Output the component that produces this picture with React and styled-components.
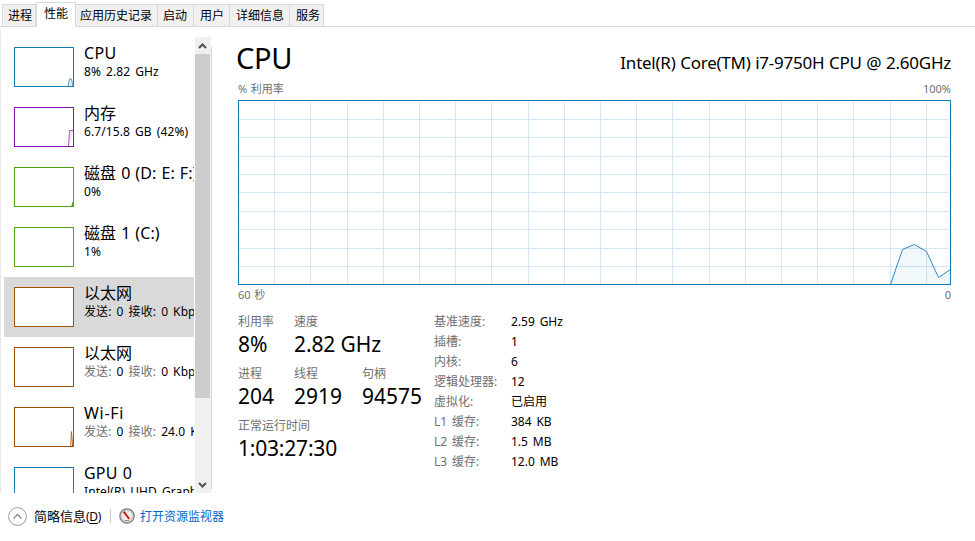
import React from 'react';
import styled, { createGlobalStyle } from 'styled-components';

const GlobalStyle = createGlobalStyle`
  * {
    box-sizing: border-box;
  }
  body {
    margin: 0;
    background-color: #fff;
    color: #000;
    font-family: 'Noto Sans', 'Noto Sans CJK SC', sans-serif;
    font-size: 12px;
    line-height: 20px;
    overflow: hidden;
  }
`;

const Window = styled.div`
  display: flex;
  flex-direction: column;
  width: 975px;
  height: 541px;
`;

const TabBar = styled.div`
  display: flex;
  align-items: flex-end;
  height: 27px;
  padding-left: 2px;
  border-bottom: 1px solid #d9d9d9;
`;

const Tab = styled.div`
  width: ${props => props.$width}px;
  height: ${props => (props.$active ? 25 : 22)}px;
  margin-bottom: ${props => (props.$active ? -1 : 0)}px;
  padding-left: ${props => props.$pad}px;
  border: 1px solid #d9d9d9;
  border-left-width: ${props => (props.$first || props.$active ? 1 : 0)}px;
  border-bottom: 0;
  background-color: ${props => (props.$active ? '#fff' : '#f0f0f0')};
  line-height: ${props => (props.$active ? 22 : 21)}px;
  white-space: nowrap;
`;

const Content = styled.div`
  display: flex;
  height: 463px;
  margin-top: 3px;
  border-left: 1px solid #e8e8e8;
`;

const Sidebar = styled.div`
  width: 191px;
  height: 456px;
  margin: 7px 0 0 3px;
  padding-right: 1px;
  overflow: hidden;
`;

const Item = styled.div`
  display: flex;
  height: 60px;
  padding: 10px 0 0 10px;
  background-color: ${props => (props.$selected ? '#d9d9d9' : '#fff')};
  overflow: hidden;
  white-space: nowrap;
`;

const Thumb = styled.svg`
  flex: none;
  width: 60px;
  height: 40px;
  margin-right: 10px;
  background-color: #fff;
`;

const ItemText = styled.div`
  margin-top: -5px;
`;

const ItemTitle = styled.div`
  font-size: 16px;
  line-height: 22px;
  letter-spacing: ${props => props.$spacing || 0}px;
  word-spacing: 0.7px;
`;

const ItemInfo = styled.div`
  font-size: 12px;
  line-height: 16px;
  letter-spacing: 0.1px;
  word-spacing: 1.8px;
`;

const Muted = styled.span`
  color: ${props => (props.$dark ? '#000' : '#707070')};
`;

const ScrollBar = styled.div`
  display: flex;
  flex-direction: column;
  width: 16px;
  height: 456px;
  margin-top: 7px;
  background-color: #f0f0f0;
`;

const Arrow = styled.svg`
  width: 15px;
  height: 17px;
`;

const ScrollThumb = styled.div`
  flex: none;
  width: 15px;
  height: 344px;
  margin-bottom: auto;
  background-color: #cdcdcd;
`;

const Divider = styled.div`
  width: 1px;
  height: 442px;
  margin-top: 17px;
  background-color: #d9d9d9;
`;

const Main = styled.div`
  width: 713px;
  margin-left: 26px;
`;

const Header = styled.div`
  display: flex;
  justify-content: space-between;
  height: 49px;
`;

const Heading = styled.div`
  margin-left: -2px;
  padding-top: 8px;
  font-size: 29px;
  line-height: 40px;
  letter-spacing: -0.3px;
`;

const Model = styled.div`
  padding-top: 21px;
  font-size: 17px;
  line-height: 24px;
  letter-spacing: -0.25px;
  word-spacing: 0.5px;
`;

const ChartCaption = styled.div`
  display: flex;
  justify-content: space-between;
  height: 21px;
  color: #707070;
  font-size: 11px;
  line-height: 20px;
  word-spacing: 0.8px;
`;

const Graph = styled.svg`
  display: block;
  width: 713px;
  height: 185px;
`;

const Stats = styled.div`
  display: flex;
  margin-top: 6px;
`;

const Counters = styled.div`
  width: 196px;
`;

const CounterRow = styled.div`
  display: grid;
  grid-template-columns: 56px 68px 72px;
  height: 52px;
  white-space: nowrap;
`;

const Label = styled.div`
  color: #707070;
  line-height: 20px;
`;

const Value = styled.div`
  font-size: 21px;
  line-height: 24px;
  letter-spacing: ${props => props.$spacing || 0}px;
`;

const Specs = styled.div`
  display: grid;
  grid-template-columns: 77px auto;
  grid-auto-rows: 20px;
  align-content: start;
  white-space: nowrap;
  word-spacing: 1.7px;
`;

const Footer = styled.div`
  display: flex;
  align-items: center;
  height: 46px;
  padding-left: 8px;
`;

const FooterIcon = styled.svg`
  width: ${props => props.$size}px;
  height: ${props => props.$size}px;
`;

const FooterText = styled.span`
  margin-left: 7px;
  font-size: 13px;
  u {
    text-underline-offset: 2px;
  }
`;

const Hotkey = styled.span`
  font-size: 12px;
  letter-spacing: -0.3px;
`;

const Separator = styled.div`
  width: 1px;
  height: 14px;
  margin: 0 8px 0 9px;
  background-color: #d0d0d0;
`;

const Link = styled.span`
  margin-left: 5px;
  padding-top: 2px;
  color: #0066cc;
`;

const tabs = [
  { name: '进程', width: 34, pad: 5 },
  { name: '性能', width: 40, pad: 7, active: true },
  { name: '应用历史记录', width: 82, pad: 4 },
  { name: '启动', width: 36, pad: 5 },
  { name: '用户', width: 36, pad: 6 },
  { name: '详细信息', width: 60, pad: 6 },
  { name: '服务', width: 34, pad: 6 },
];

const blue = '#117dbb';
const green = '#4da60c';
const brown = '#a74f01';

const devices = [
  { title: 'CPU', info: '8% 2.82 GHz', color: blue, spacing: 0.4, line: '54,39.5 55.5,32 57.5,32 59,39.5' },
  { title: '内存', info: '6.7/15.8 GB (42%)', color: '#8b12ae', line: '54.5,39.5 55.5,23.5 59.5,23.5' },
  { title: '磁盘 0 (D: E: F:)', info: '0%', color: green, spacing: 0.1, line: '57.5,39.5 59,35 59.5,39.5', fill: green },
  { title: '磁盘 1 (C:)', info: '1%', color: green, spacing: 0.1 },
  { title: '以太网', send: '0', receive: '0 Kbps', color: brown, selected: true },
  { title: '以太网', send: '0', receive: '0 Kbps', color: brown },
  { title: 'Wi-Fi', send: '0', receive: '24.0 Kbps', color: brown, spacing: 0.7, line: '56.5,39.5 57.5,24.5 58.5,39.5 59.5,30' },
  { title: 'GPU 0', info: 'Intel(R) UHD Graphics', color: blue, spacing: 0.2 },
];

const specs = [
  ['基准速度:', '2.59 GHz'],
  ['插槽:', '1'],
  ['内核:', '6'],
  ['逻辑处理器:', '12'],
  ['虚拟化:', '已启用'],
  ['L1 缓存:', '384 KB'],
  ['L2 缓存:', '1.5 MB'],
  ['L3 缓存:', '12.0 MB'],
];

const columns = [36, 72, 109, 145, 181, 217, 253, 290, 326, 362, 398, 434, 471, 507, 543, 579, 615, 652, 688];
const rows = [19, 37, 56, 74, 92, 111, 129, 148, 166];

const Device = ({ device }) => (
  <Item $selected={device.selected}>
    <Thumb viewBox="0 0 60 40">
      {device.line && (
        <polyline
          points={device.line}
          fill={device.fill || device.color}
          fillOpacity={device.fill ? 1 : 0.12}
          stroke={device.color}
          strokeOpacity="0.7"
        />
      )}
      <rect x="0.5" y="0.5" width="59" height="39" fill="none" stroke={device.color} />
    </Thumb>
    <ItemText>
      <ItemTitle $spacing={device.spacing}>{device.title}</ItemTitle>
      {device.info ? (
        <ItemInfo>{device.info}</ItemInfo>
      ) : (
        <ItemInfo>
          <Muted $dark={device.selected}>发送:</Muted> {device.send}{' '}
          <Muted $dark={device.selected}>接收:</Muted> {device.receive}
        </ItemInfo>
      )}
    </ItemText>
  </Item>
);

const CpuGraph = () => (
  <Graph viewBox="0 0 713 185">
    <path
      d={columns.map(x => `M${x + 0.5} 1V184`).join('') + rows.map(y => `M1 ${y + 0.5}H711`).join('')}
      stroke="#d5e7f2"
    />
    <path d="M652.5 184.5L664.5 149.5L676.5 144.5L688.5 151.5L700.5 177.5L712.5 169.5V184.5Z" fill={blue} fillOpacity="0.06" />
    <path d="M652.5 184.5L664.5 149.5L676.5 144.5L688.5 151.5L700.5 177.5L712.5 169.5" fill="none" stroke="#2b8bc3" />
    <rect x="0.5" y="0.5" width="712" height="184" fill="none" stroke={blue} />
  </Graph>
);

const Counter = ({ label, value, spacing }) => (
  <div>
    <Label>{label}</Label>
    <Value $spacing={spacing}>{value}</Value>
  </div>
);

const App = () => (
  <Window>
    <GlobalStyle />
    <TabBar>
      {tabs.map((tab, i) => (
        <Tab key={tab.name} $width={tab.width} $pad={tab.pad} $active={tab.active} $first={i === 0}>
          {tab.name}
        </Tab>
      ))}
    </TabBar>
    <Content>
      <Sidebar>
        {devices.map((device, i) => (
          <Device key={i} device={device} />
        ))}
      </Sidebar>
      <ScrollBar>
        <Arrow viewBox="0 0 15 17">
          <path d="M4 11L7.5 7.5L11 11" fill="none" stroke="#505050" strokeWidth="2" />
        </Arrow>
        <ScrollThumb />
        <Arrow viewBox="0 0 15 17">
          <path d="M4 7L7.5 10.5L11 7" fill="none" stroke="#505050" strokeWidth="2" />
        </Arrow>
      </ScrollBar>
      <Divider />
      <Main>
        <Header>
          <Heading>CPU</Heading>
          <Model>Intel(R) Core(TM) i7-9750H CPU @ 2.60GHz</Model>
        </Header>
        <ChartCaption>
          <span>% 利用率</span>
          <span>100%</span>
        </ChartCaption>
        <CpuGraph />
        <ChartCaption>
          <span>60 秒</span>
          <span>0</span>
        </ChartCaption>
        <Stats>
          <Counters>
            <CounterRow>
              <Counter label="利用率" value="8%" />
              <Counter label="速度" value="2.82 GHz" spacing={-0.1} />
            </CounterRow>
            <CounterRow>
              <Counter label="进程" value="204" />
              <Counter label="线程" value="2919" />
              <Counter label="句柄" value="94575" />
            </CounterRow>
            <CounterRow>
              <Counter label="正常运行时间" value="1:03:27:30" spacing={-0.2} />
            </CounterRow>
          </Counters>
          <Specs>
            {specs.map(([name, value]) => (
              <React.Fragment key={name}>
                <Label>{name}</Label>
                <span>{value}</span>
              </React.Fragment>
            ))}
          </Specs>
        </Stats>
      </Main>
    </Content>
    <Footer>
      <FooterIcon $size={19} viewBox="0 0 19 19">
        <circle cx="9.5" cy="9.5" r="8.9" fill="#fff" stroke="#999" />
        <path d="M5.5 11.5L9.5 7.5L13.5 11.5" fill="none" stroke="#8a8a8a" strokeWidth="1.3" />
      </FooterIcon>
      <FooterText>
        简略信息
        <Hotkey>
          (<u>D</u>)
        </Hotkey>
      </FooterText>
      <Separator />
      <FooterIcon $size={16} viewBox="0 0 16 16">
        <circle cx="8" cy="8" r="7.2" fill="#d4d4d4" stroke="#777" strokeWidth="1.2" />
        <circle cx="8" cy="8" r="5.5" fill="#f4efec" stroke="#bbb" strokeWidth="0.7" />
        <path d="M4 4.5L5.5 3L11 10.5L9.5 11.5Z" fill="#d01515" />
        <path d="M5.5 12.5H10" stroke="#999" />
      </FooterIcon>
      <Link>打开资源监视器</Link>
    </Footer>
  </Window>
);

export default App;
